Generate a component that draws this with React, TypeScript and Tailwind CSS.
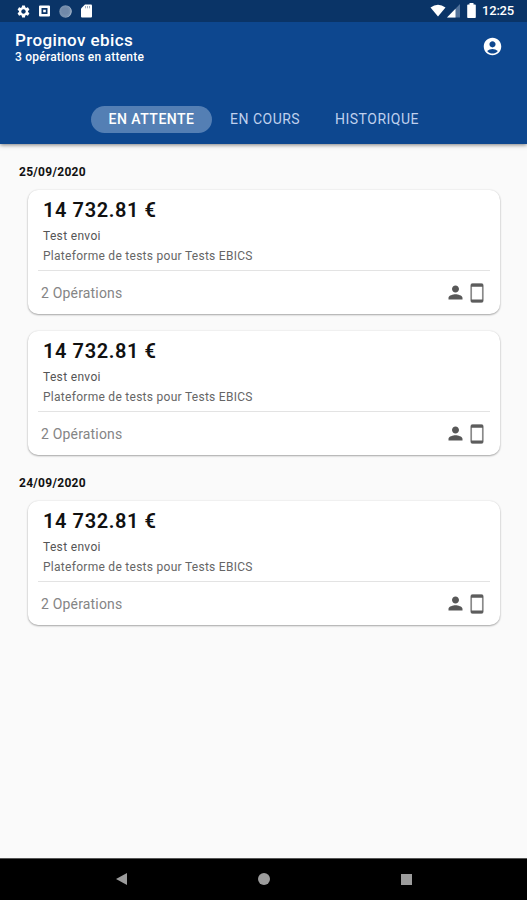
import { MdSettings, MdAccountCircle, MdPerson } from "react-icons/md";

const groups = [
  { date: "25/09/2020", count: 2 },
  { date: "24/09/2020", count: 1 },
];

function StatusBar() {
  return (
    <div className="flex h-[22px] items-center bg-[#0a3467] pl-4 pr-[13px] text-white">
      <MdSettings className="size-[15px] shrink-0" />
      <svg className="ml-[8px] h-[12px] w-[11px]" viewBox="0 0 11 12">
        <path fill="currentColor" fillRule="evenodd" d="M1 .5h9q1 0 1 1v9q0 1-1 1H1q-1 0-1-1v-9q0-1 1-1zM2.500 3v6h6V3zM4.200 4.700h2.600v2.600H4.200z" />
      </svg>
      <svg className="ml-[9px] size-[13px]" viewBox="0 0 13 13">
        <circle cx="6.500" cy="6.500" r="6.200" fill="#7890ae" />
        <path d="M8 .7a6 6 0 0 1-2 11.500 6 6 0 0 0 6-8.500A6 6 0 0 0 8 .7z" fill="#a4b5ca" />
        <circle cx="6" cy="6" r="3.800" fill="#7189a9" />
      </svg>
      <svg className="ml-[9px] h-[14px] w-[11px]" viewBox="0 0 11 14">
        <path fill="currentColor" d="M4 .5h6q1 0 1 1v11q0 1-1 1H1q-1 0-1-1v-8z" />
        <path stroke="#8799b2" strokeWidth=".8" d="M4.500 2v2.300M6.500 2v2.300M8.500 2v2.300" />
      </svg>
      <svg className="ml-auto h-[14px] w-[16px]" viewBox="0 0 16 14">
        <path fill="currentColor" d="M.5 3.500Q8-2 15.500 3.500L8 12.500z" />
      </svg>
      <svg className="ml-px h-[14px] w-[13px]" viewBox="0 0 13 14">
        <path fill="#53739b" d="M13 0v13.500H0z" />
        <path fill="currentColor" d="M8.500 4.700v8.800H0z" />
      </svg>
      <svg className="mb-[2px] ml-[7px] h-[15px] w-[9px]" viewBox="0 0 9 15">
        <path fill="currentColor" d="M2.500 0h4v1.500H8q.8 0 .8.800v11.900q0 .8-.8.800H1q-.8 0-.8-.8V2.300q0-.8.800-.8h1.500z" />
      </svg>
      <span className="ml-[6px] w-[32px] whitespace-nowrap text-[13px] font-medium leading-[22px] tracking-[-0.2px]">12:25</span>
    </div>
  );
}

function Card() {
  return (
    <article className="ml-[28px] mr-[27px] h-[124px] rounded-[10px] bg-white shadow-[0_1px_2px_rgba(0,0,0,0.32),0_0_2px_rgba(0,0,0,0.1)]">
      <div className="h-[80px] pl-[15px] pt-[7px]">
        <div className="text-[20px] font-semibold leading-[26px] tracking-[0.6px] text-[#111]">14 732.81 €</div>
        <div className="mt-[3px] text-[12px] leading-[20px] tracking-[0.33px] text-[#555]">Test envoi</div>
        <div className="text-[12px] leading-[20px] tracking-[0.28px] text-[#666]">Plateforme de tests pour Tests EBICS</div>
      </div>
      <div className="mx-[10px] h-px bg-[#e3e3e3]" />
      <div className="flex h-[43px] items-center pl-[13px] pr-[16px]">
        <span className="text-[14px] leading-[20px] tracking-[0.18px] text-[#858585]">2 Opérations</span>
        <MdPerson className="ml-auto size-[21px] text-[#585858]" />
        <svg className="ml-[4px] h-[20px] w-[14px]" viewBox="0 0 14 20">
          <rect x="1.200" y="1" width="11.600" height="18" rx="1.500" fill="none" stroke="#8a8a8a" strokeWidth="1.700" />
          <path fill="#5c5c5c" d="M2 .8h10q.8 0 1 .8v2.200H1V1.600Q1.200.8 2 .8zM1 16.500h12v1.900q-.2.8-1 .8H2q-.8 0-1-.8z" />
        </svg>
      </div>
    </article>
  );
}

export default function App() {
  return (
    <div className="flex h-[900px] w-[527px] flex-col overflow-hidden bg-[#fafafa] font-['Roboto',sans-serif]">
      <header className="z-10 h-[144px] shrink-0 bg-[#0d478f] text-white shadow-[0_1px_4px_rgba(0,0,0,0.5)]">
        <StatusBar />
        <div className="flex h-[84px] justify-between pl-[15px] pr-[24px]">
          <div className="pt-[8px]">
            <h1 className="text-[17px] font-medium leading-[20px] tracking-[0.4px]">Proginov ebics</h1>
            <p className="text-[12px] font-medium leading-[14px] tracking-[0.22px]">3 opérations en attente</p>
          </div>
          <MdAccountCircle className="mt-[14px] size-[21px]" />
        </div>
        <nav className="ml-[91px] flex h-[27px] text-[14px] leading-[26px] tracking-[0.5px] text-[#bfd0ed]">
          <span className="h-[27px] w-[121px] rounded-full bg-[#547fb4] text-center font-medium text-white">EN ATTENTE</span>
          <span className="ml-[18px] w-[105px]">EN COURS</span>
          <span>HISTORIQUE</span>
        </nav>
      </header>
      <main className="flex-1">
        {groups.map((group) => (
          <section key={group.date} className="pt-[19px]">
            <h2 className="mb-[8px] pl-[19px] text-[12px] font-bold leading-[19px] tracking-[0.3px] text-[#111]">{group.date}</h2>
            <div className="flex flex-col gap-[17px]">
              {Array.from({ length: group.count }, (_, i) => <Card key={i} />)}
            </div>
          </section>
        ))}
      </main>
      <footer className="flex h-[42px] shrink-0 items-center border-t border-[#555] bg-black pb-px">
        <svg className="ml-[116px] h-[12px] w-[11px]" viewBox="0 0 11 12"><path fill="#9c9c9c" d="M0 6 11 0v12z" /></svg>
        <span className="ml-[131px] size-[12px] rounded-full bg-[#9c9c9c]" />
        <span className="ml-[131px] size-[11px] bg-[#9c9c9c]" />
      </footer>
    </div>
  );
}
